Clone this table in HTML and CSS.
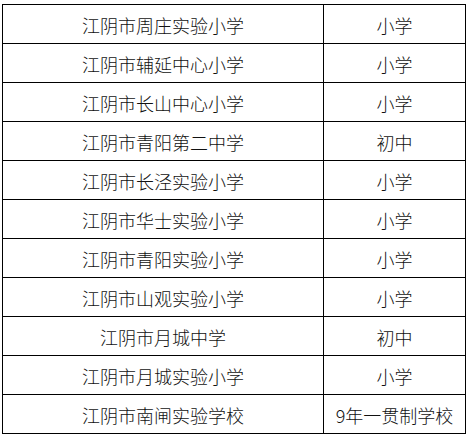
FILE: index.html
```html
<!DOCTYPE html>
<html lang="zh">
<head>
<meta charset="utf-8">
<link rel="stylesheet" href="styles.css">
</head>
<body>
<div class="table">
  <div class="cell name">江阴市周庄实验小学</div><div class="cell type">小学</div>
  <div class="cell name">江阴市辅延中心小学</div><div class="cell type">小学</div>
  <div class="cell name">江阴市长山中心小学</div><div class="cell type">小学</div>
  <div class="cell name">江阴市青阳第二中学</div><div class="cell type">初中</div>
  <div class="cell name">江阴市长泾实验小学</div><div class="cell type">小学</div>
  <div class="cell name">江阴市华士实验小学</div><div class="cell type">小学</div>
  <div class="cell name">江阴市青阳实验小学</div><div class="cell type">小学</div>
  <div class="cell name">江阴市山观实验小学</div><div class="cell type">小学</div>
  <div class="cell name">江阴市月城中学</div><div class="cell type">初中</div>
  <div class="cell name">江阴市月城实验小学</div><div class="cell type">小学</div>
  <div class="cell name">江阴市南闸实验学校</div><div class="cell type">9年一贯制学校</div>
</div>
</body>
</html>
```
FILE: styles.css
```css
html, body {
  margin: 0;
  padding: 0;
  background: #fff;
}
body {
  padding: 4px 0 0 2px;
  font-family: "Microsoft YaHei", "Noto Sans CJK SC", "Noto Sans", sans-serif;
  font-size: 18px;
  font-weight: 300;
  color: #111;
}
.table {
  display: grid;
  grid-template-columns: 321px 142px;
  grid-auto-rows: 39px;
  width: 463px;
  border-left: 1px solid #000;
  border-top: 1px solid #000;
}
.cell {
  box-sizing: border-box;
  border-right: 1px solid #000;
  border-bottom: 1px solid #000;
  display: flex;
  align-items: center;
  justify-content: center;
  line-height: 1;
  padding-top: 1px;
}
```
